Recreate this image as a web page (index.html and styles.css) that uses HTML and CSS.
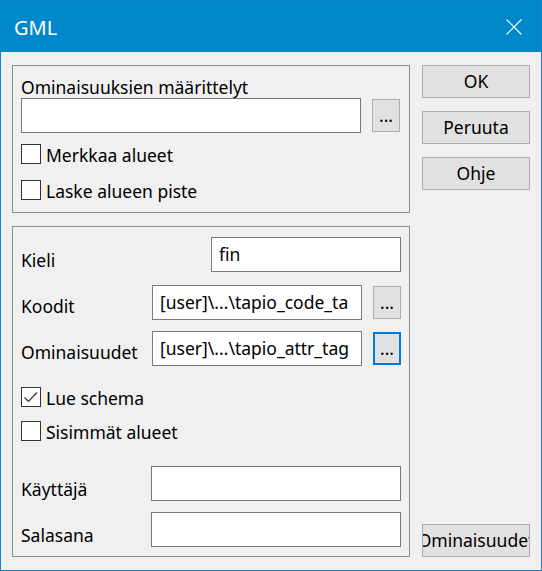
FILE: index.html
```html
<!DOCTYPE html>
<html lang="fi">
<head>
    <meta charset="UTF-8">
    <meta name="viewport" content="width=device-width, initial-scale=1.0">
    <title>GML</title>
    <link rel="stylesheet" href="styles.css">
</head>
<body>
    <div class="window">
        <div class="titlebar">
            <span class="title">GML</span>
            <svg class="close" width="16" height="16" viewBox="0 0 16 16">
                <path d="M0.5 0.5 L15.5 15.5 M15.5 0.5 L0.5 15.5" stroke="#fff" stroke-width="1.1" fill="none"/>
            </svg>
        </div>
        <div class="dialog">
            <div class="main">
                <div class="group group-def">
                    <div class="caption">Ominaisuuksien määrittelyt</div>
                    <div class="file-row">
                        <div class="edit edit-def"></div>
                        <div class="browse">...</div>
                    </div>
                    <div class="check check-first"><span class="box"></span><span>Merkkaa alueet</span></div>
                    <div class="check check-second"><span class="box"></span><span>Laske alueen piste</span></div>
                </div>
                <div class="group group-opts">
                    <div class="field row-lang">
                        <span class="lbl">Kieli</span>
                        <div class="edit edit-short">fin</div>
                    </div>
                    <div class="field file row-codes">
                        <span class="lbl">Koodit</span>
                        <div class="edit edit-path">[user]\...\tapio_code_ta</div>
                        <div class="browse">...</div>
                    </div>
                    <div class="field file row-attrs">
                        <span class="lbl">Ominaisuudet</span>
                        <div class="edit edit-path">[user]\...\tapio_attr_tag</div>
                        <div class="browse focused">...</div>
                    </div>
                    <div class="check row-schema">
                        <span class="box checked">
                            <svg width="18" height="18" viewBox="0 0 18 18">
                                <path d="M2.5 9.5 L6.5 13.5 L15 4.5" stroke="#333" stroke-width="1.2" fill="none"/>
                            </svg>
                        </span>
                        <span>Lue schema</span>
                    </div>
                    <div class="check row-inner"><span class="box"></span><span>Sisimmät alueet</span></div>
                    <div class="field row-user">
                        <span class="lbl">Käyttäjä</span>
                        <div class="edit edit-long"></div>
                    </div>
                    <div class="field row-pass">
                        <span class="lbl">Salasana</span>
                        <div class="edit edit-long"></div>
                    </div>
                </div>
            </div>
            <div class="side">
                <div class="btn">OK</div>
                <div class="btn">Peruuta</div>
                <div class="btn">Ohje</div>
                <div class="btn btn-props"><span>Ominaisuudet</span></div>
            </div>
        </div>
    </div>
</body>
</html>
```

FILE: styles.css
```css
* {
    box-sizing: border-box;
}
body {
    margin: 0;
    font-family: "Noto Sans", "Open Sans", sans-serif;
    font-size: 17.5px;
    color: #000;
}
.window {
    width: 542px;
    height: 571px;
    border: 1px solid #1284cc;
    background-color: #f0f0f0;
    display: flex;
    flex-direction: column;
}

/* title bar */
.titlebar {
    height: 51px;
    background-color: #0088ca;
    color: #fff;
    display: flex;
    justify-content: space-between;
    align-items: flex-start;
    padding: 13px 19px 0 13px;
}
.title {
    font-size: 20px;
    line-height: 27px;
}
.close {
    margin-top: 5px;
}

/* dialog body */
.dialog {
    flex: 1;
    display: flex;
    gap: 12px;
    padding: 13px 11px 13px 11px;
}
.main {
    width: 398px;
    display: flex;
    flex-direction: column;
    gap: 13px;
}
.group {
    border: 1px solid #8f8f8f;
    padding: 0 8px;
}
.group-def {
    height: 148px;
    padding-top: 11px;
}
.group-opts {
    height: 331px;
    padding-top: 10px;
}
.caption {
    height: 21px;
    line-height: 21px;
    white-space: nowrap;
}

/* edit boxes and browse buttons */
.edit {
    height: 35px;
    line-height: 33px;
    border: 1px solid #7a7a7a;
    background-color: #fff;
    padding-left: 7px;
    white-space: nowrap;
    overflow: hidden;
}
.edit-def {
    width: 340px;
}
.edit-short {
    width: 190px;
}
.edit-path {
    width: 210px;
}
.edit-long {
    width: 250px;
}
.file-row {
    display: flex;
    align-items: center;
    gap: 11px;
}
.browse {
    width: 28px;
    height: 33px;
    line-height: 31px;
    border: 1px solid #adadad;
    background-color: #e1e1e1;
    text-align: center;
}
.browse.focused {
    border: 2px solid #0078d7;
    line-height: 29px;
}

/* check boxes */
.check {
    display: flex;
    height: 20px;
    line-height: 23px;
    gap: 5px;
    white-space: nowrap;
}
.box {
    width: 20px;
    height: 20px;
    flex-shrink: 0;
    border: 1px solid #333;
    background-color: #fff;
}
.box svg {
    display: block;
}
.check-first {
    margin-top: 11px;
}
.check-second {
    margin-top: 16px;
}

/* labelled fields */
.field {
    display: flex;
    align-items: flex-end;
}
.field.file {
    align-items: center;
}
.lbl {
    flex: 1;
    line-height: 20px;
    padding-bottom: 2px;
}
.field.file .lbl {
    align-self: flex-end;
    padding-bottom: 4px;
}
.field.file .browse {
    margin-left: 11px;
}
.row-codes {
    margin-top: 13px;
}
.row-attrs {
    margin-top: 11px;
}
.row-schema {
    margin-top: 21px;
}
.row-inner {
    margin-top: 14px;
}
.row-user {
    margin-top: 25px;
}
.row-pass {
    margin-top: 11px;
}

/* command buttons */
.side {
    width: 108px;
    display: flex;
    flex-direction: column;
    gap: 13px;
}
.btn {
    height: 33px;
    line-height: 31px;
    border: 1px solid #adadad;
    background-color: #e1e1e1;
    text-align: center;
}
.btn-props {
    margin-top: auto;
    display: flex;
    justify-content: center;
    overflow: hidden;
    white-space: nowrap;
}
.btn-props span {
    flex-shrink: 0;
}
```
